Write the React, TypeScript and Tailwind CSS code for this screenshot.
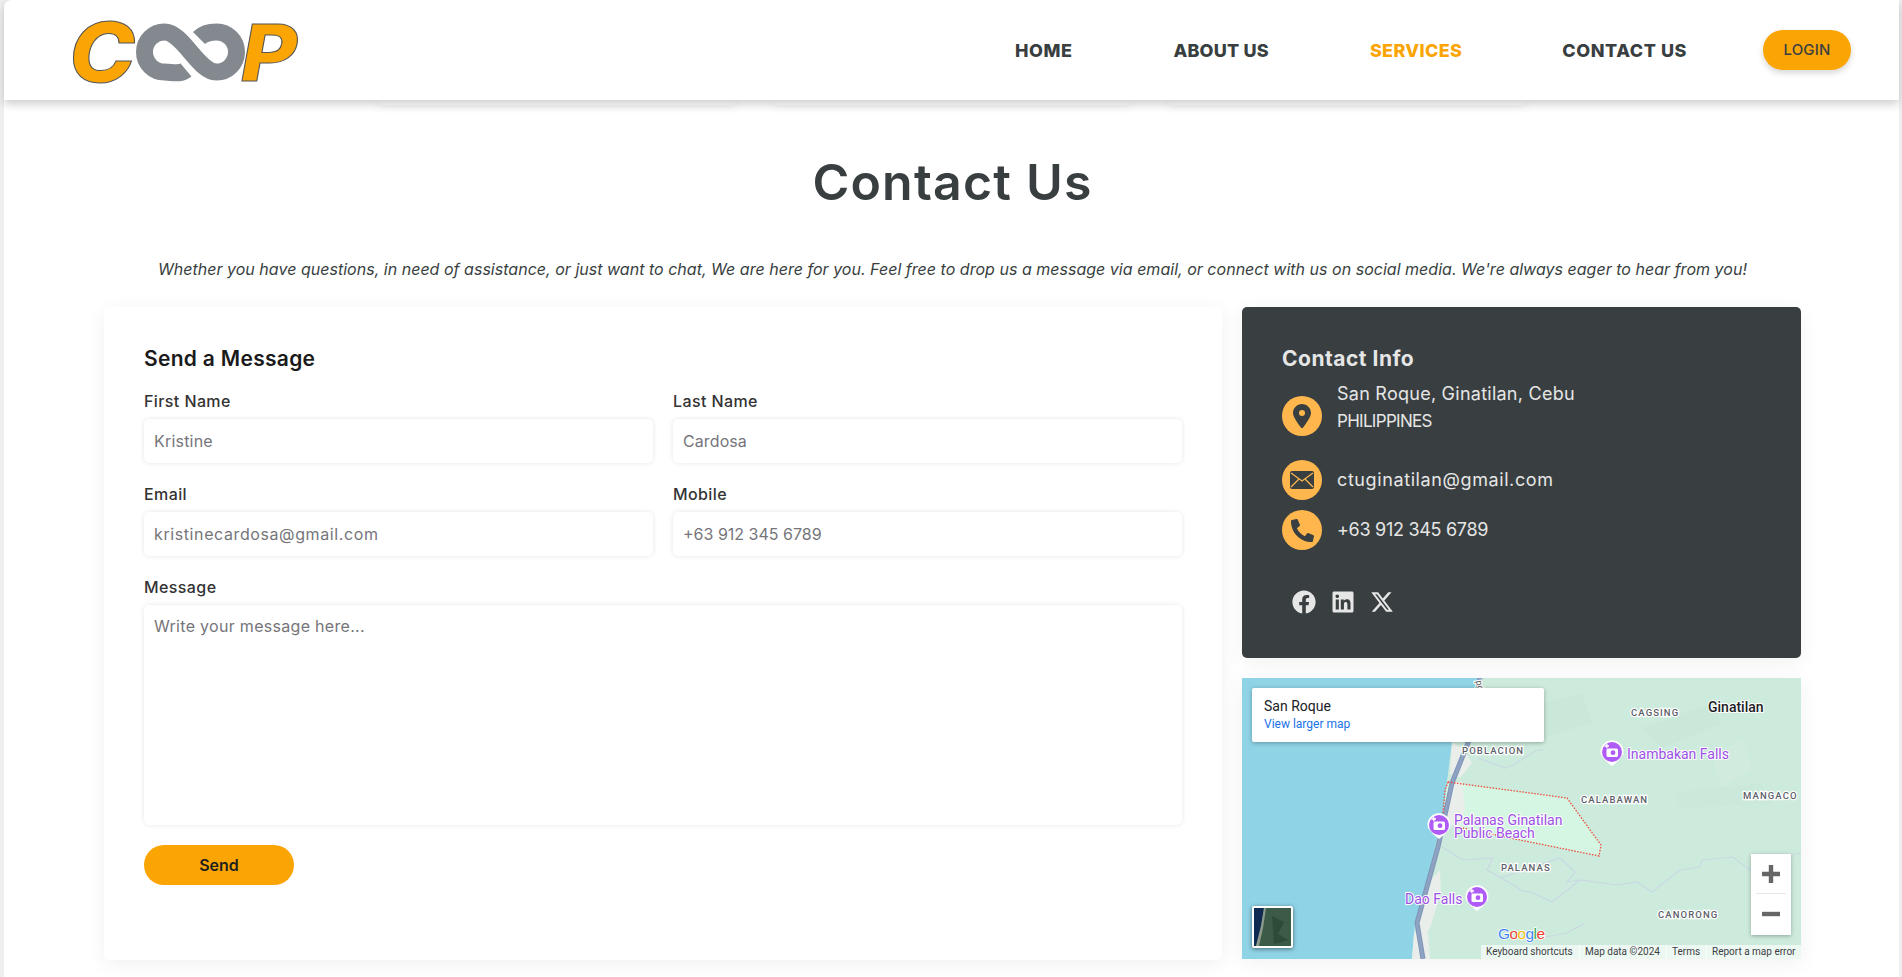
import React from "react";
import { FaFacebook, FaLinkedin, FaPhoneAlt } from "react-icons/fa";
import { FaLocationDot, FaXTwitter } from "react-icons/fa6";

function Logo() {
  return (
    <svg width="240" height="100" viewBox="60 0 240 100" className="block overflow-visible font-['Inter']">
      <path d="M186 70 C180 75 172 72 164.5 72 A20 20 0 1 1 164.5 32 C183 32 198 72 216.5 72 A20 20 0 1 0 216.5 32 C209 32 203 34 199 38" fill="none" stroke="#83898f" strokeWidth="17" />
      <text x="69" y="82" fontWeight="800" fontStyle="italic" fontSize="82" fill="#fba504" stroke="#555" strokeWidth="1" textLength="66" lengthAdjust="spacingAndGlyphs">C</text>
      <text x="241" y="81" fontWeight="800" fontStyle="italic" fontSize="78" fill="#fba504" stroke="#555" strokeWidth="1" textLength="56" lengthAdjust="spacingAndGlyphs">P</text>
    </svg>
  );
}

function Field({ label, placeholder, spacing }: { label: string; placeholder: string; spacing: string }) {
  return (
    <div className="flex flex-col">
      <label className="mb-[8px] text-[16px] leading-[20px] font-medium tracking-[0.4px] text-[#333]">{label}</label>
      <input placeholder={placeholder} className={`h-[44px] w-full rounded-[5px] bg-white pl-[10px] text-[16px] shadow-[0_0_5px_rgba(0,0,0,0.1)] outline-none placeholder:text-[#75757a] ${spacing}`} />
    </div>
  );
}

function Circle({ children }: { children: React.ReactNode }) {
  return <div className="flex h-[40px] w-[40px] shrink-0 items-center justify-center rounded-full bg-[#ffb74d] text-[#393f41]">{children}</div>;
}

function Pin({ x, y }: { x: number; y: number }) {
  return (
    <g transform={`translate(${x} ${y})`}>
      <path d="M-11 3 A11.5 11.5 0 1 1 11 3 Q7 9 0 14 Q-7 9 -11 3Z" fill="#fff" />
      <circle r="10" fill="#af5cf7" />
      <rect x="-5.5" y="-3.5" width="11.5" height="8.5" rx="1.5" fill="#fff" />
      <circle cx="1" cy="0.7" r="2.4" fill="#af5cf7" />
      <path d="M-7.5-6h4.5M-5.2-8.2v4.5" stroke="#fff" strokeWidth="1.3" />
    </g>
  );
}

function MapText({ x, y, children }: { x: number; y: number; children: string }) {
  return (
    <text x={x} y={y} fontSize="9.5" fontWeight="500" letterSpacing="1.1" fill="#5c6068" stroke="#fff" strokeWidth="2.4" paintOrder="stroke">
      {children}
    </text>
  );
}

function PoiText({ x, y, children }: { x: number; y: number; children: string }) {
  return (
    <text x={x} y={y} fontSize="14" fill="#9c4fe6" stroke="#fff" strokeWidth="1.8" paintOrder="stroke">
      {children}
    </text>
  );
}

function MapDrawing() {
  return (
    <svg viewBox="0 0 559 281" width="559" height="281" className="block font-['Roboto']">
      <rect width="559" height="281" fill="#8fd3e6" />
      <path d="M236 0 L559 0 L559 281 L170 281 L173 245 L185 205 L201 135 L210 64Z" fill="#cdebdc" />
      <g fill="#c8e6d6" opacity="0.4">
        <path d="M280 30 L340 15 L350 45 L300 60Z" />
        <path d="M400 50 L470 25 L480 45 L420 70Z" />
        <path d="M430 115 L520 105 L530 125 L440 130Z" />
      </g>
      <path d="M470 80 L500 60 L510 90 L480 110Z" fill="#d5eee1" opacity="0.5" />
      <path d="M206 104 L288 115 L325 120 L359 167 L357 178 L278 162 L211 148 L201 135Z" fill="#d4f6e3" />
      <g fill="#e9eeeb">
        <path d="M210 104 L220 104 L223 130 L218 150 L210 148 L204 135Z" />
        <path d="M186 205 L198 192 L199 215 L188 250 L178 262 L174 245Z" />
        <path d="M172 255 L185 245 L188 281 L170 281Z" />
        <path d="M210 64 L222 72 L230 85 L218 100 L208 96Z" />
      </g>
      <g fill="none" stroke="#c9d8e2" strokeWidth="1.2">
        <path d="M200 169 L221 182 L251 180 L245 192 L275 209 L278 212 L291 215 L310 224 L338 202 L375 207 L395 204 L410 214 L438 192 L458 189 L460 182 L491 179 L508 192 L535 189 L548 177 L559 175" />
        <path d="M258 200 L318 180 L333 194 L325 204 L338 202" />
        <path d="M303 259 L325 255 L343 245" />
        <path d="M236 80 L263 90 L271 87 L295 72 L301 72" />
      </g>
      <path d="M238 0 L226 65 L210 105 L196 169 L175 245 L181 281" fill="none" stroke="#7f95b8" strokeWidth="5" />
      <path d="M238 0 L226 65 L210 105 L196 169 L175 245 L181 281" fill="none" stroke="#8ea2c2" strokeWidth="3" />
      <path d="M206 104 L288 115 L325 120 L359 167 L357 178 L278 162 L211 148 M206 104 L203 112 L201 135" fill="none" stroke="#ee4b3b" strokeWidth="1.3" strokeDasharray="1.5 1.5" />
      <text x="0" y="0" transform="translate(234 3) rotate(80)" fontSize="9" fill="#555" stroke="#fff" strokeWidth="2" paintOrder="stroke">pd</text>
      <MapText x={220} y={76}>POBLACION</MapText>
      <MapText x={389} y={38}>CAGSING</MapText>
      <MapText x={339} y={125}>CALABAWAN</MapText>
      <MapText x={501} y={121}>MANGACO</MapText>
      <MapText x={259} y={193}>PALANAS</MapText>
      <MapText x={416} y={240}>CANORONG</MapText>
      <text x={466} y={34} fontSize="14" fontWeight="500" fill="#202124" stroke="#fff" strokeWidth="1.8" paintOrder="stroke">Ginatilan</text>
      <Pin x={197} y={147} />
      <Pin x={235} y={219} />
      <Pin x={370} y={74} />
      <PoiText x={212} y={147}>Palanas Ginatilan</PoiText>
      <PoiText x={212} y={160}>Public Beach</PoiText>
      <PoiText x={163} y={226}>Dao Falls</PoiText>
      <PoiText x={385} y={81}>Inambakan Falls</PoiText>
      <text x={256} y={261} fontSize="15.5" fontFamily="'Liberation Sans',sans-serif" stroke="#fff" strokeWidth="1.5" paintOrder="stroke" textLength="47">
        <tspan fill="#4285f4">G</tspan><tspan fill="#ea4335">o</tspan><tspan fill="#fbbc05">o</tspan><tspan fill="#4285f4">g</tspan><tspan fill="#34a853">l</tspan><tspan fill="#ea4335">e</tspan>
      </text>
    </svg>
  );
}

export default function App() {
  return (
    <div className="min-h-[977px] overflow-hidden bg-[#efefef] pl-[4px] pr-[3px] font-['Inter',sans-serif]">
      <div className="min-h-[977px] rounded-tl-[8px] bg-white">
        <header className="relative z-10 flex h-[100px] items-center justify-between rounded-tl-[8px] bg-white pl-[56px] pr-[48px] shadow-[0_4px_10px_rgba(0,0,0,0.2)]">
          <Logo />
          <nav className="flex items-center text-[18px] font-extrabold tracking-[0.2px] text-[#393f41]">
            <a className="tracking-[0.5px]">HOME</a>
            <a className="ml-[101px]">ABOUT US</a>
            <a className="ml-[101px] tracking-[0.35px] text-[#fba504]">SERVICES</a>
            <a className="ml-[100px] tracking-[0.55px]">CONTACT US</a>
            <button className="ml-[76px] flex h-[40px] w-[88px] items-center justify-center rounded-[20px] bg-[#fba504] text-[15px] font-medium tracking-[0.2px] text-[#393f41] shadow-[0_3px_6px_rgba(0,0,0,0.16)]">LOGIN</button>
          </nav>
        </header>
        <div className="flex h-[5px] justify-center gap-[35px]">
          <div className="w-[360px] rounded-b-[8px] bg-white shadow-[0_2px_8px_rgba(0,0,0,0.08)]" />
          <div className="w-[360px] rounded-b-[8px] bg-white shadow-[0_2px_8px_rgba(0,0,0,0.08)]" />
          <div className="w-[360px] rounded-b-[8px] bg-white shadow-[0_2px_8px_rgba(0,0,0,0.08)]" />
        </div>
        <main className="pl-[100px] pr-[98px]">
          <h1 className="mt-[41px] text-center text-[50px] leading-[72px] font-semibold tracking-[1.2px] text-[#393f41]">Contact Us</h1>
          <p className="mt-[39px] text-center text-[16px] leading-[24px] tracking-[0.02px] italic text-[#393f41]">
            Whether you have questions, in need of assistance, or just want to chat, We are here for you. Feel free to drop us a message via email, or connect with us on social media. We're always eager to hear from you!
          </p>
          <div className="mt-[26px] grid grid-cols-[1118px_559px] gap-[20px]">
            <section className="h-[653px] rounded-[5px] bg-white px-[40px] pt-[37px] shadow-[0_4px_20px_rgba(0,0,0,0.06)]">
              <h2 className="text-[21px] leading-[30px] font-semibold tracking-[0.3px] text-[#1a1a1a]">Send a Message</h2>
              <div className="mt-[17px] grid grid-cols-[509px_509px] gap-x-[20px] gap-y-[21px]">
                <Field label="First Name" placeholder="Kristine" spacing="tracking-[0.2px]" />
                <Field label="Last Name" placeholder="Cardosa" spacing="tracking-[0.1px]" />
                <Field label="Email" placeholder="kristinecardosa@gmail.com" spacing="tracking-[0.6px]" />
                <Field label="Mobile" placeholder="+63 912 345 6789" spacing="tracking-[0px]" />
              </div>
              <label className="mt-[21px] mb-[8px] block text-[16px] leading-[20px] font-medium tracking-[0.4px] text-[#333]">Message</label>
              <textarea placeholder="Write your message here..." className="block h-[220px] w-[1038px] resize-none rounded-[5px] bg-white px-[10px] pt-[9px] text-[16px] tracking-[0.3px] shadow-[0_0_5px_rgba(0,0,0,0.1)] outline-none placeholder:text-[#75757a]" />
              <button className="mt-[20px] h-[40px] w-[150px] rounded-[20px] bg-[#fba504] text-[16px] font-semibold text-[#1f1f1f]">Send</button>
            </section>
            <div className="flex flex-col gap-[20px]">
              <section className="h-[351px] rounded-[5px] bg-[#393f41] px-[40px] pt-[37px] text-[#e6e6e6] shadow-[0_4px_20px_rgba(0,0,0,0.06)]">
                <h2 className="text-[21px] leading-[30px] font-bold tracking-[0.5px]">Contact Info</h2>
                <div className="mt-[6px] flex items-start gap-[15px]">
                  <div className="mt-[16px]"><Circle><FaLocationDot size={24} /></Circle></div>
                  <p className="text-[18px] leading-[27px] tracking-[0.25px]">San Roque, Ginatilan, Cebu<br /><span className="text-[17px] tracking-[-0.7px]">PHILIPPINES</span></p>
                </div>
                <div className="mt-[24px] flex items-center gap-[15px]">
                  <Circle>
                    <svg width="24" height="18" viewBox="0 0 24 18"><rect width="24" height="18" rx="2" fill="#393f41" /><path d="M1 2 L12 10 L23 2 M1 16 L9 8 M23 16 L15 8" stroke="#ffb74d" strokeWidth="1.2" fill="none" /></svg>
                  </Circle>
                  <span className="-mt-[2px] text-[18px] leading-[27px] tracking-[0.6px]">ctuginatilan@gmail.com</span>
                </div>
                <div className="mt-[10px] flex items-center gap-[15px]">
                  <Circle><FaPhoneAlt size={23} /></Circle>
                  <span className="-mt-[2px] text-[18px] leading-[27px] tracking-[-0.3px]">+63 912 345 6789</span>
                </div>
                <div className="mt-[40px] ml-[10px] flex gap-[15px]">
                  <FaFacebook size={24} />
                  <FaLinkedin size={24} />
                  <FaXTwitter size={24} />
                </div>
              </section>
              <section className="relative h-[281px] overflow-hidden shadow-[0_4px_20px_rgba(0,0,0,0.06)]">
                <MapDrawing />
                <div className="absolute left-[10px] top-[10px] h-[54px] w-[292px] rounded-[2px] bg-white pl-[12px] pt-[9px] font-['Roboto'] shadow-[0_1px_4px_rgba(0,0,0,0.3)]">
                  <div className="text-[14px] leading-[18px] text-[#202124]">San Roque</div>
                  <div className="text-[12px] leading-[18px] text-[#1a73e8]">View larger map</div>
                </div>
                <div className="absolute left-[10px] top-[228px] h-[42px] w-[41px] overflow-hidden rounded-[2px] border-2 border-white bg-[#35513f] shadow-[0_1px_4px_rgba(0,0,0,0.5)]">
                  <svg width="37" height="38" viewBox="0 0 37 38"><rect width="37" height="38" fill="#3c5b47" /><path d="M0 0 H10 L7 18 L2 38 H0Z" fill="#0f2b52" /><path d="M10 0 L7 18 L2 38 H5 L9 20 L12 0Z" fill="#8c9a8e" /><path d="M18 8 L30 14 L24 26 L34 32 L20 36Z" fill="#2e4a38" /></svg>
                </div>
                <div className="absolute left-[509px] top-[176px] flex h-[81px] w-[40px] flex-col items-center bg-white shadow-[0_1px_4px_rgba(0,0,0,0.3)]">
                  <svg width="18" height="18" viewBox="0 0 18 18" className="mt-[11px]"><path d="M0 9H18M9 0V18" stroke="#666" strokeWidth="4.4" /></svg>
                  <div className="mt-[10px] h-px w-[30px] bg-[#e6e6e6]" />
                  <svg width="18" height="18" viewBox="0 0 18 18" className="mt-[11px]"><path d="M0 9H18" stroke="#666" strokeWidth="4.4" /></svg>
                </div>
                <div className="absolute bottom-0 right-0 flex h-[14px] items-center bg-[#ffffffa8] font-['Roboto'] text-[10px] leading-[14px] text-[#3c4043]">
                  <span className="w-[98px] pl-[5px]">Keyboard shortcuts</span>
                  <span className="w-[87px] border-l border-[#ffffff99] pl-[5px]">Map data ©2024</span>
                  <span className="w-[40px] border-l border-[#ffffff99] pl-[5px]">Terms</span>
                  <span className="w-[95px] border-l border-[#ffffff99] pl-[5px]">Report a map error</span>
                </div>
              </section>
            </div>
          </div>
        </main>
      </div>
    </div>
  );
}
